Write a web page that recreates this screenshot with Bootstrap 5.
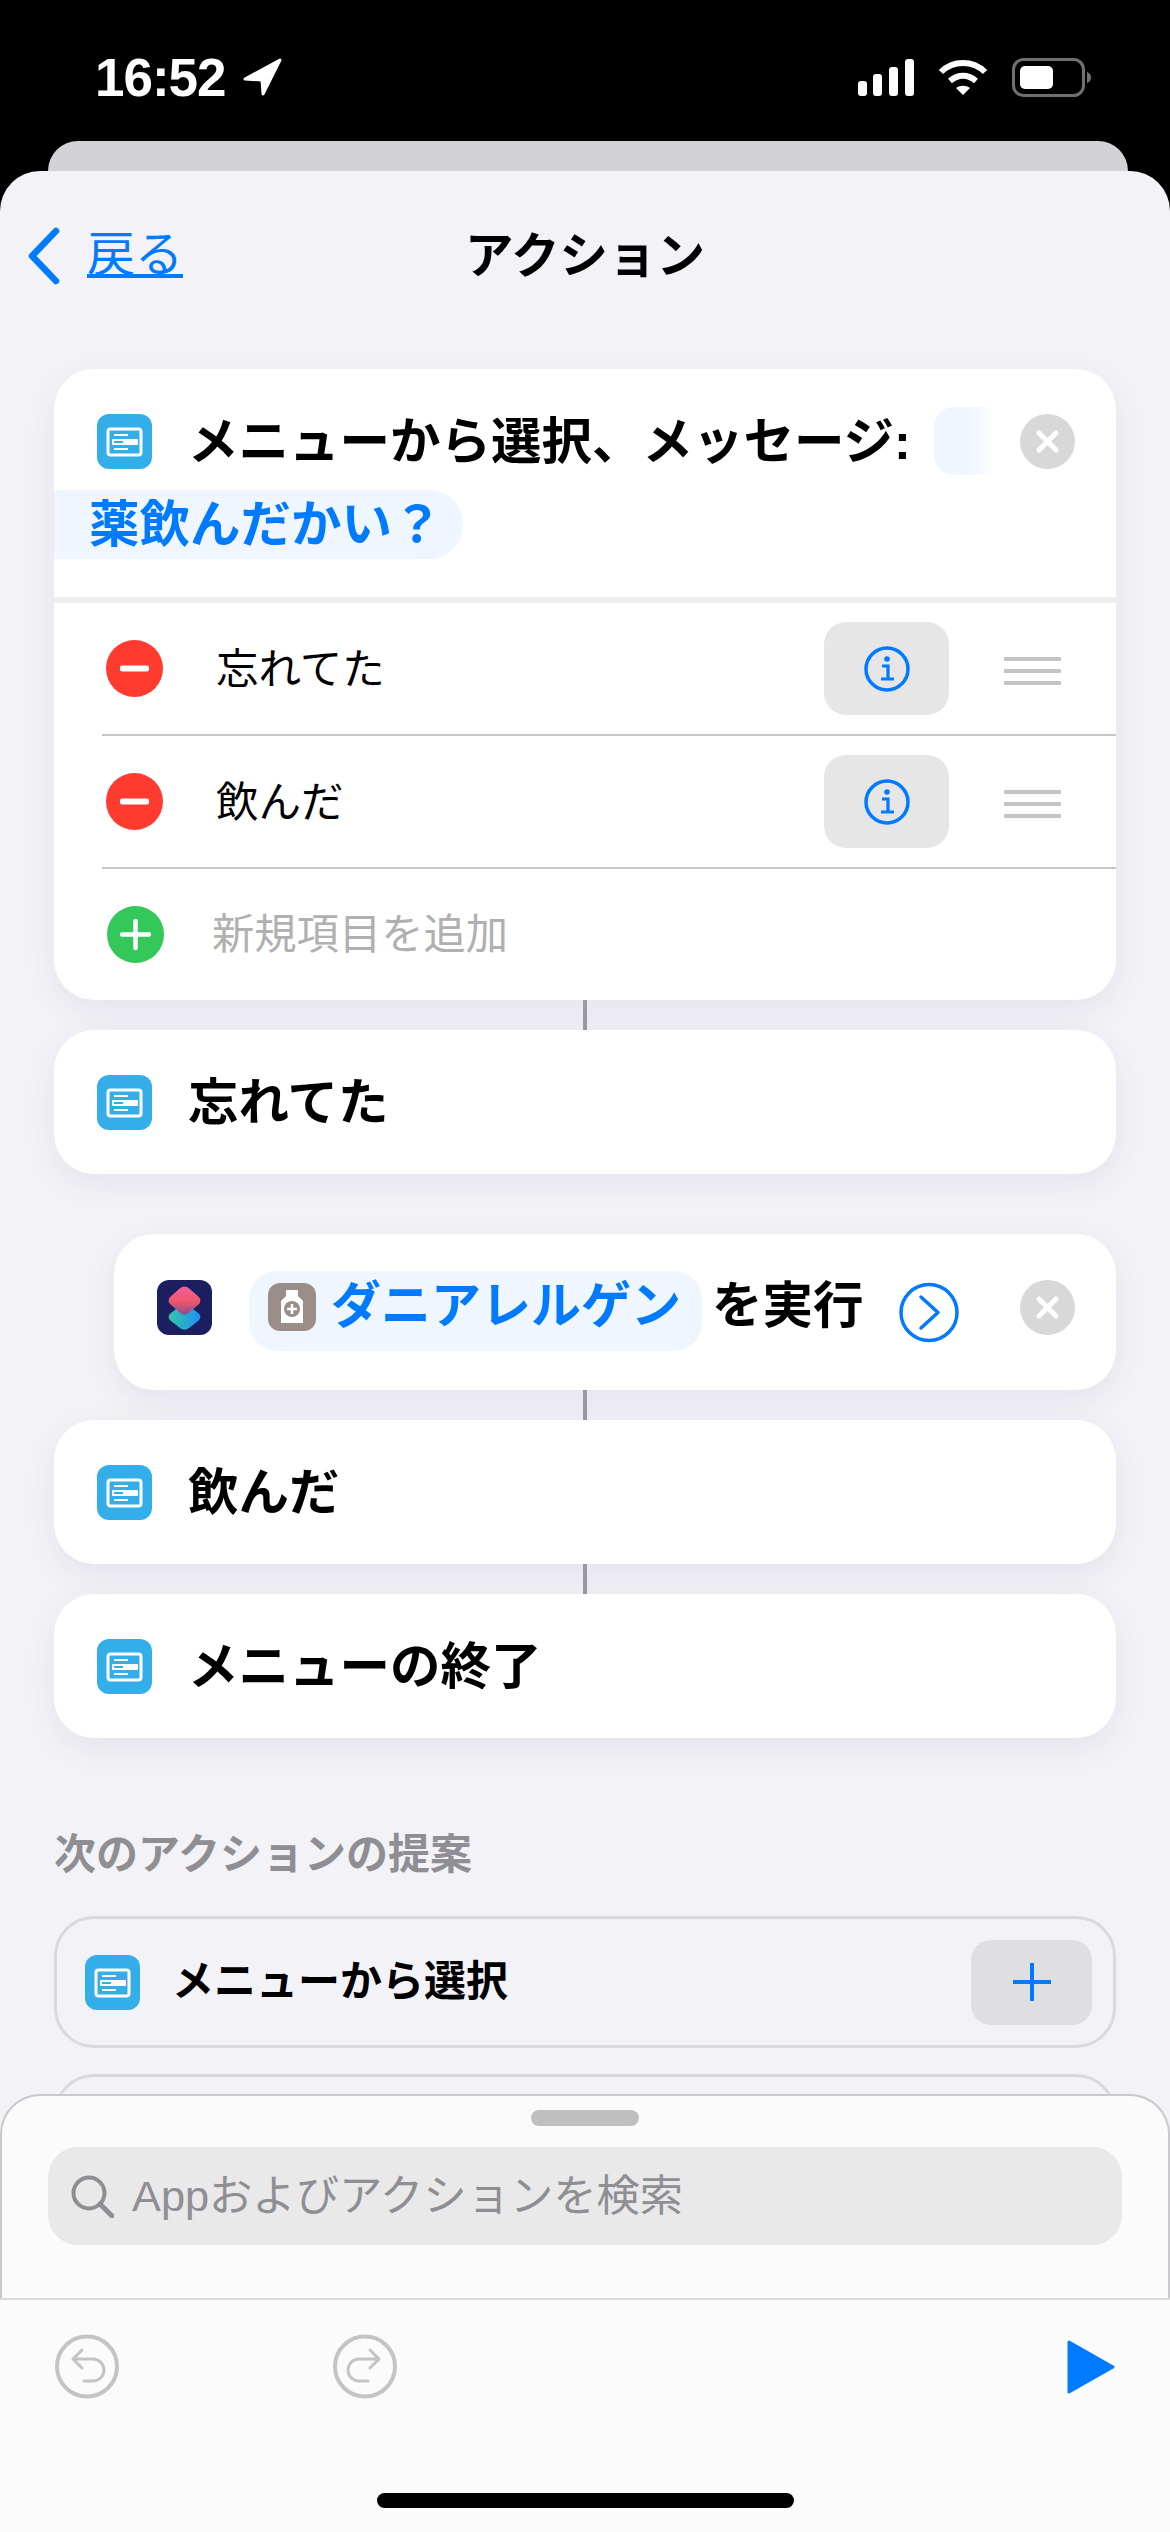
<!DOCTYPE html>
<html lang="ja">
<head>
    <meta charset="UTF-8">
    <title>アクション</title>
    <link rel="stylesheet" href="https://cdn.jsdelivr.net/npm/bootstrap@5.3.0/dist/css/bootstrap.min.css">
    <style>
        body { background: #000; font-family: "Liberation Sans", "Noto Sans CJK JP", sans-serif; }
        .phone { width: 1170px; height: 2532px; overflow: hidden; background: #000; }
        .status-bar { height: 141px; padding: 13px 78px 0 95px; color: #fff; }
        .status-time { font-size: 53px; font-weight: 700; line-height: 1; letter-spacing: -1px; }
        .back-sheet { height: 30px; margin: 0 42px 0 48px; background: #d3d2d7; border-radius: 30px 30px 0 0; }
        .main-sheet { height: 2361px; background: #f2f2f7; border-radius: 40px 40px 0 0; }
        .nav-top { height: 168px; }
        .nav-chevron { left: 26px; top: 56px; }
        .nav-back { left: 87px; top: 54px; font-size: 48px; line-height: 60px; color: #007aff; }
        .nav-title { font-size: 48.5px; font-weight: 700; color: #000; padding-top: 2px; }
        .stack { margin: 30px 54px 0; }
        .act-box { background: #fff; border-radius: 40px; box-shadow: 0 10px 34px rgba(60, 60, 90, .08); }
        .act-plain { height: 144px; padding-left: 43px; gap: 36px; }
        .act-run { height: 156px; margin: 60px 0 0 60px; padding: 0 41px 0 43px; }
        .act-text { font-size: 50.5px; font-weight: 700; line-height: 1.2; padding-top: 2px; color: #000; white-space: nowrap; }
        .blue-text { color: #007aff; }
        .link-line { width: 4px; height: 30px; background: #9a9aa0; margin: 0 auto; }
        .head-row { margin-top: 38px; height: 68px; padding: 0 41px 0 43px; gap: 36px; }
        .head-title { width: 710px; }
        .ghost-pill { width: 62px; height: 68px; margin-right: -12px; border-radius: 20px 0 0 20px; background: linear-gradient(90deg, #eff6ff 55%, #fff); }
        .msg-pill { width: 409px; height: 69px; margin: 15px 0 38px; padding-left: 35px; background: #eff6ff; border-radius: 0 34px 34px 0; }
        .thick-rule { height: 6px; background: #eeeeee; }
        .item-row { height: 131px; margin-left: 48px; padding: 0 55px 0 4px; }
        .item-rule { height: 133px; border-bottom: 2px solid #c6c6c8; }
        .item-text { font-size: 42.5px; margin-left: 53px; color: #000; line-height: 1.2; padding-top: 2px; }
        .item-hint { font-size: 42.3px; margin-left: 48px; color: #b0b0b0; line-height: 1.2; padding-top: 2px; }
        .plus-mark { margin-left: 1px; }
        .info-btn { width: 125px; height: 93px; margin-left: auto; margin-right: 55px; background: #e6e6e6; border-radius: 22px; }
        .drag-stack { margin-top: 5px; }
        .drag-bar { width: 57px; height: 4px; background: #c4c4c4; border-radius: 1px; }
        .med-pill { width: 453px; height: 80px; margin-left: 37px; margin-bottom: 2px; padding-left: 19px; gap: 15px; background: #eff6ff; border-radius: 28px; }
        .med-pill svg { margin-bottom: 8px; }
        .med-name { font-size: 50px; margin-bottom: 12px; }
        .run-word { margin-left: 10px; margin-bottom: 14px; }
        .run-chevron { margin-left: 35px; }
        .run-close { margin-left: auto; }
        .lift { margin-bottom: 9px; }
        .suggest-title { margin: 87px 0 31px; font-size: 42px; font-weight: 700; line-height: 60px; color: #8e8e93; }
        .suggest-box { height: 132px; margin-bottom: 26px; padding: 0 21px 0 28px; gap: 32px; border: 3px solid #d9d9de; border-radius: 40px; }
        .suggest-text { font-size: 42px; font-weight: 700; color: #000; line-height: 1.2; }
        .add-btn { width: 121px; height: 85px; margin-left: auto; background: #dedee3; border-radius: 20px; }
        .bottom-panel { left: 0; right: 0; bottom: 0; height: 438px; background: #fbfbfb; border: 2px solid #c9c9cd; border-bottom: 0; border-radius: 40px 40px 0 0; }
        .grab-bar { width: 108px; height: 16px; margin: 14px auto 21px; background: #bfbfbf; border-radius: 8px; }
        .search-field { height: 98px; margin: 0 46px 53px; padding-left: 23px; gap: 18px; background: #e9e9ea; border-radius: 30px; font-size: 43.3px; color: #8e8e93; }
        .tool-bar { margin: 0 -2px; height: 234px; padding: 34px 55px 0; background: #fbfbfb; border-top: 2px solid #dcdcdc; }
        .tool-gap { margin-left: 214px; }
        .home-bar { width: 417px; height: 15px; margin: 94px auto 0; background: #000; border-radius: 8px; }
    </style>
</head>
<body>
    <!-- shared icons -->
    <svg width="0" height="0" class="position-absolute">
        <defs>
            <symbol id="menu-icon" viewBox="0 0 55 55">
                <rect width="55" height="55" rx="12" fill="#33aee9"/>
                <rect x="11" y="15" width="33" height="26" rx="2.5" fill="none" stroke="#fff" stroke-width="3"/>
                <path d="M17 21h14M17 35h14" stroke="#fff" stroke-width="2"/>
                <rect x="15" y="25" width="26" height="6" rx="1" fill="#fff"/>
                <path d="M17 28h9" stroke="#33aee9" stroke-width="2"/>
            </symbol>
            <symbol id="close-icon" viewBox="0 0 55 55">
                <circle cx="27.5" cy="27.5" r="27.5" fill="#d8d8d8"/>
                <path d="M19 19l17 17M36 19l-17 17" stroke="#fff" stroke-width="5" stroke-linecap="round"/>
            </symbol>
            <symbol id="minus-icon" viewBox="0 0 57 57">
                <circle cx="28.5" cy="28.5" r="28.5" fill="#ff3b30"/>
                <rect x="14" y="25.5" width="29" height="6" rx="2" fill="#fff"/>
            </symbol>
            <symbol id="info-icon" viewBox="0 0 46 46">
                <circle cx="23" cy="23" r="21" fill="none" stroke="#007aff" stroke-width="3.5"/>
                <circle cx="23" cy="13" r="2.8" fill="#007aff"/>
                <path d="M18 20h6v13M17 33h13" fill="none" stroke="#007aff" stroke-width="3.2"/>
            </symbol>
            <linearGradient id="upper-fill" x1="0" y1="0" x2="1" y2="1">
                <stop offset="0" stop-color="#ef5fa8"/>
                <stop offset=".5" stop-color="#f2596c"/>
                <stop offset="1" stop-color="#7b4a90"/>
            </linearGradient>
            <linearGradient id="lower-fill" x1="1" y1="0" x2="0" y2="1">
                <stop offset="0" stop-color="#1b8dff"/>
                <stop offset="1" stop-color="#38c9a0"/>
            </linearGradient>
        </defs>
    </svg>

    <div class="phone position-relative">
        <div class="status-bar d-flex align-items-center">
            <span class="status-time">16:52</span>
            <svg class="ms-3" width="40" height="38" viewBox="0 0 40 38"><path d="M38 2L3 21l17 1 1 14z" fill="#fff" stroke="#fff" stroke-width="3" stroke-linejoin="round"/></svg>
            <svg class="ms-auto" width="56" height="37" viewBox="0 0 56 37" fill="#fff">
                <rect x="0" y="22" width="9" height="15" rx="3"/>
                <rect x="15" y="15" width="9" height="22" rx="3"/>
                <rect x="31" y="8" width="9" height="29" rx="3"/>
                <rect x="47" y="0" width="9" height="37" rx="3"/>
            </svg>
            <svg class="ms-4" width="50" height="37" viewBox="0 0 50 37" fill="none" stroke="#fff" stroke-width="6">
                <path d="M3 13C15 1 35 1 47 13"/>
                <path d="M12 22c8-7 18-7 26 0"/>
                <path d="M25 36l-7-7c4-3 10-3 14 0z" fill="#fff" stroke="none"/>
            </svg>
            <svg class="ms-4" width="80" height="39" viewBox="0 0 80 39">
                <rect x="1.5" y="1.5" width="70" height="36" rx="10" fill="none" stroke="#707070" stroke-width="3"/>
                <rect x="8" y="8" width="33" height="23" rx="5" fill="#fff"/>
                <path d="M75 14c3 1 4 3 4 5.500s-1 4.500-4 5.500z" fill="#707070"/>
            </svg>
        </div>
        <div class="back-sheet"></div>
        <div class="main-sheet">
            <div class="nav-top position-relative d-flex align-items-center justify-content-center">
                <svg class="nav-chevron position-absolute" width="36" height="58" viewBox="0 0 36 58"><path d="M30 4L6 29l24 25" fill="none" stroke="#007aff" stroke-width="6.500" stroke-linecap="round" stroke-linejoin="round"/></svg>
                <a class="nav-back position-absolute" href="#">戻る</a>
                <span class="nav-title">アクション</span>
            </div>

            <div class="stack">
                <div class="act-box overflow-hidden">
                    <div class="head-row d-flex align-items-center">
                        <svg width="55" height="55" class="flex-shrink-0"><use href="#menu-icon"/></svg>
                        <span class="act-text head-title flex-shrink-0">メニューから選択、メッセージ:</span>
                        <span class="ghost-pill flex-shrink-0"></span>
                        <svg width="55" height="55" class="flex-shrink-0"><use href="#close-icon"/></svg>
                    </div>
                    <div class="msg-pill d-flex align-items-center act-text blue-text">薬飲んだかい？</div>
                    <div class="thick-rule"></div>
                    <div class="item-row item-rule d-flex align-items-center">
                        <svg width="57" height="57"><use href="#minus-icon"/></svg>
                        <span class="item-text">忘れてた</span>
                        <span class="info-btn d-flex align-items-center justify-content-center"><svg width="46" height="46"><use href="#info-icon"/></svg></span>
                        <span class="drag-stack d-flex flex-column gap-2"><span class="drag-bar"></span><span class="drag-bar"></span><span class="drag-bar"></span></span>
                    </div>
                    <div class="item-row item-rule d-flex align-items-center">
                        <svg width="57" height="57"><use href="#minus-icon"/></svg>
                        <span class="item-text">飲んだ</span>
                        <span class="info-btn d-flex align-items-center justify-content-center"><svg width="46" height="46"><use href="#info-icon"/></svg></span>
                        <span class="drag-stack d-flex flex-column gap-2"><span class="drag-bar"></span><span class="drag-bar"></span><span class="drag-bar"></span></span>
                    </div>
                    <div class="item-row d-flex align-items-center">
                        <svg class="plus-mark" width="57" height="57" viewBox="0 0 57 57">
                            <circle cx="28.500" cy="28.500" r="28.500" fill="#34c759"/>
                            <path d="M28.500 15v27M15 28.500h27" stroke="#fff" stroke-width="4.500" stroke-linecap="round"/>
                        </svg>
                        <span class="item-hint">新規項目を追加</span>
                    </div>
                </div>

                <div class="link-line"></div>
                <div class="act-box act-plain d-flex align-items-center">
                    <svg width="55" height="55"><use href="#menu-icon"/></svg>
                    <span class="act-text">忘れてた</span>
                </div>

                <div class="act-box act-run d-flex align-items-center">
                    <svg class="lift flex-shrink-0" width="55" height="55" viewBox="0 0 55 55">
                        <rect width="55" height="55" rx="12" fill="#1b1f5f"/>
                        <rect x="-13" y="-13" width="26" height="26" rx="6" fill="url(#lower-fill)" transform="translate(27.500 37) scale(1 .8) rotate(45)"/>
                        <rect x="-13" y="-13" width="26" height="26" rx="6" fill="url(#upper-fill)" transform="translate(27.500 20.500) scale(1 .88) rotate(45)"/>
                    </svg>
                    <span class="med-pill d-flex align-items-center flex-shrink-0">
                        <svg width="48" height="48" viewBox="0 0 48 48" class="flex-shrink-0">
                            <rect width="48" height="48" rx="12" fill="#9b8e89"/>
                            <path d="M18 7h12v6l5 5v22H13V18l5-5z" fill="#fff"/>
                            <circle cx="24" cy="26" r="8" fill="#9b8e89"/>
                            <path d="M24 21v10M19 26h10" stroke="#fff" stroke-width="2.500"/>
                        </svg>
                        <span class="act-text med-name blue-text">ダニアレルゲン</span>
                    </span>
                    <span class="act-text run-word">を実行</span>
                    <svg class="run-chevron flex-shrink-0" width="60" height="61" viewBox="0 0 60 61">
                        <circle cx="30" cy="30.500" r="28" fill="none" stroke="#007aff" stroke-width="3.500"/>
                        <path d="M22 15l17 15.500L22 46" fill="none" stroke="#007aff" stroke-width="3.500" stroke-linecap="round" stroke-linejoin="round"/>
                    </svg>
                    <svg class="run-close lift flex-shrink-0" width="55" height="55"><use href="#close-icon"/></svg>
                </div>

                <div class="link-line"></div>
                <div class="act-box act-plain d-flex align-items-center">
                    <svg width="55" height="55"><use href="#menu-icon"/></svg>
                    <span class="act-text">飲んだ</span>
                </div>
                <div class="link-line"></div>
                <div class="act-box act-plain d-flex align-items-center">
                    <svg width="55" height="55"><use href="#menu-icon"/></svg>
                    <span class="act-text">メニューの終了</span>
                </div>

                <div class="suggest-title">次のアクションの提案</div>
                <div class="suggest-box d-flex align-items-center">
                    <svg width="55" height="55"><use href="#menu-icon"/></svg>
                    <span class="suggest-text">メニューから選択</span>
                    <span class="add-btn d-flex align-items-center justify-content-center">
                        <svg width="38" height="38" viewBox="0 0 38 38"><path d="M19 1v36M1 19h36" stroke="#007aff" stroke-width="4" stroke-linecap="round"/></svg>
                    </span>
                </div>
                <div class="suggest-box"></div>
            </div>
        </div>

        <!-- bottom drawer lies over the list -->
        <div class="bottom-panel position-absolute">
            <div class="grab-bar"></div>
            <div class="search-field d-flex align-items-center">
                <svg width="43" height="43" viewBox="0 0 43 43" class="flex-shrink-0" fill="none" stroke="#8e8e93" stroke-width="4">
                    <circle cx="18" cy="18" r="15.500"/>
                    <path d="M29 29l12 12" stroke-width="5" stroke-linecap="round"/>
                </svg>
                <span>Appおよびアクションを検索</span>
            </div>
            <div class="tool-bar">
                <div class="d-flex align-items-center">
                    <svg width="64" height="65" viewBox="0 0 64 65" fill="none" stroke="#c4c4c4">
                        <circle cx="32" cy="32.500" r="30" stroke-width="4"/>
                        <path d="M27 16l-9 9 9 9M18 25h20a11 11 0 0 1 0 22h-9" stroke-width="3" stroke-linecap="round" stroke-linejoin="round"/>
                    </svg>
                    <svg class="tool-gap" width="64" height="65" viewBox="0 0 64 65" fill="none" stroke="#c4c4c4">
                        <circle cx="32" cy="32.500" r="30" stroke-width="4"/>
                        <path d="M37 16l9 9-9 9M46 25H26a11 11 0 0 0 0 22h9" stroke-width="3" stroke-linecap="round" stroke-linejoin="round"/>
                    </svg>
                    <svg class="ms-auto" width="48" height="54" viewBox="0 0 48 54"><path d="M2 2l44 25L2 52z" fill="#007aff" stroke="#007aff" stroke-width="3" stroke-linejoin="round"/></svg>
                </div>
                <div class="home-bar"></div>
            </div>
        </div>
    </div>

    <script src="https://cdn.jsdelivr.net/npm/bootstrap@5.3.0/dist/js/bootstrap.bundle.min.js"></script>
</body>
</html>
